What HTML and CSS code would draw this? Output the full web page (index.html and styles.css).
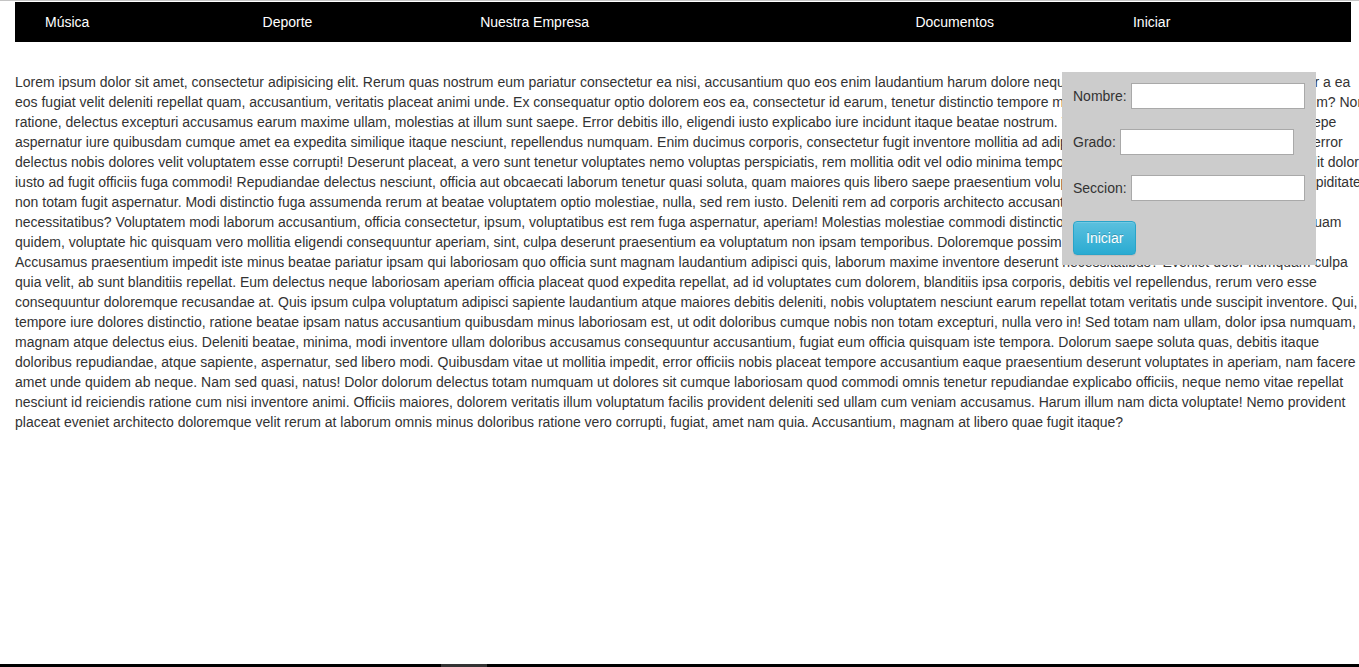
FILE: index.html
```html
<!DOCTYPE html>
<html lang="es">
<head>
<meta charset="utf-8">
<title>Inicio</title>
<link rel="stylesheet" href="styles.css">
</head>
<body>
<div class="topline"></div>
<nav class="menu">
  <a href="#" class="menu-item">Música</a>
  <a href="#" class="menu-item">Deporte</a>
  <a href="#" class="menu-item">Nuestra Empresa</a>
  <a href="#" class="menu-item menu-item--docs">Documentos</a>
  <a href="#" class="menu-item">Iniciar</a>
</nav>
<main class="content">
  <p class="lorem">Lorem ipsum dolor sit amet, consectetur adipisicing elit. Rerum quas nostrum eum pariatur consectetur ea nisi, accusantium quo eos enim laudantium harum dolore neque quisquam ullam, voluptas nobis tempor a ea<br>
eos fugiat velit deleniti repellat quam, accusantium, veritatis placeat animi unde. Ex consequatur optio dolorem eos ea, consectetur id earum, tenetur distinctio tempore molestiae ipsum ea reiciendis quasi dolorem? Non<br>
ratione, delectus excepturi accusamus earum maxime ullam, molestias at illum sunt saepe. Error debitis illo, eligendi iusto explicabo iure incidunt itaque beatae nostrum. Voluptatum aperiam, ipsum tenetur et saepe<br>
aspernatur iure quibusdam cumque amet ea expedita similique itaque nesciunt, repellendus numquam. Enim ducimus corporis, consectetur fugit inventore mollitia ad adipisci, natus quis sunt dolorum ipsa quod error<br>
delectus nobis dolores velit voluptatem esse corrupti! Deserunt placeat, a vero sunt tenetur voluptates nemo voluptas perspiciatis, rem mollitia odit vel odio minima tempora quam, sunt nesciunt debitis, quasi, velit dolores<br>
iusto ad fugit officiis fuga commodi! Repudiandae delectus nesciunt, officia aut obcaecati laborum tenetur quasi soluta, quam maiores quis libero saepe praesentium voluptatem aliquid, nulla, nemo sed facere cupiditate<br>
non totam fugit aspernatur. Modi distinctio fuga assumenda rerum at beatae voluptatem optio molestiae, nulla, sed rem iusto. Deleniti rem ad corporis architecto accusantium odio quis vel, quidem<br>
necessitatibus? Voluptatem modi laborum accusantium, officia consectetur, ipsum, voluptatibus est rem fuga aspernatur, aperiam! Molestias molestiae commodi distinctio odit, recusandae explicabo totam ipsa quam<br>
quidem, voluptate hic quisquam vero mollitia eligendi consequuntur aperiam, sint, culpa deserunt praesentium ea voluptatum non ipsam temporibus. Doloremque possimus nobis nulla.<br>
Accusamus praesentium impedit iste minus beatae pariatur ipsam qui laboriosam quo officia sunt magnam laudantium adipisci quis, laborum maxime inventore deserunt necessitatibus? Eveniet dolor numquam culpa<br>
quia velit, ab sunt blanditiis repellat. Eum delectus neque laboriosam aperiam officia placeat quod expedita repellat, ad id voluptates cum dolorem, blanditiis ipsa corporis, debitis vel repellendus, rerum vero esse<br>
consequuntur doloremque recusandae at. Quis ipsum culpa voluptatum adipisci sapiente laudantium atque maiores debitis deleniti, nobis voluptatem nesciunt earum repellat totam veritatis unde suscipit inventore. Qui,<br>
tempore iure dolores distinctio, ratione beatae ipsam natus accusantium quibusdam minus laboriosam est, ut odit doloribus cumque nobis non totam excepturi, nulla vero in! Sed totam nam ullam, dolor ipsa numquam,<br>
magnam atque delectus eius. Deleniti beatae, minima, modi inventore ullam doloribus accusamus consequuntur accusantium, fugiat eum officia quisquam iste tempora. Dolorum saepe soluta quas, debitis itaque<br>
doloribus repudiandae, atque sapiente, aspernatur, sed libero modi. Quibusdam vitae ut mollitia impedit, error officiis nobis placeat tempore accusantium eaque praesentium deserunt voluptates in aperiam, nam facere<br>
amet unde quidem ab neque. Nam sed quasi, natus! Dolor dolorum delectus totam numquam ut dolores sit cumque laboriosam quod commodi omnis tenetur repudiandae explicabo officiis, neque nemo vitae repellat<br>
nesciunt id reiciendis ratione cum nisi inventore animi. Officiis maiores, dolorem veritatis illum voluptatum facilis provident deleniti sed ullam cum veniam accusamus. Harum illum nam dicta voluptate! Nemo provident<br>
placeat eveniet architecto doloremque velit rerum at laborum omnis minus doloribus ratione vero corrupti, fugiat, amet nam quia. Accusantium, magnam at libero quae fugit itaque?</p>

  <form class="login">
    <div class="login-row">
      <label class="login-label" for="nombre">Nombre:</label>
      <input class="login-input" id="nombre" type="text">
    </div>
    <div class="login-row">
      <label class="login-label" for="grado">Grado:</label>
      <input class="login-input" id="grado" type="text">
    </div>
    <div class="login-row">
      <label class="login-label" for="seccion">Seccion:</label>
      <input class="login-input" id="seccion" type="text">
    </div>
    <button type="button" class="btn-info">Iniciar</button>
  </form>
</main>
<div class="scrollbar"><div class="scrollbar-thumb"></div></div>
</body>
</html>
```

FILE: styles.css
```css
html, body {
  overflow: hidden;
}
body {
  margin: 0;
  font-family: "Liberation Sans", Arial, Helvetica, sans-serif;
  font-size: 14px;
  line-height: 20px;
  color: #333;
  background: #fff;
}
.topline {
  height: 1px;
  background: #c4c4c4;
  margin-bottom: 1px;
}
.menu {
  display: grid;
  grid-template-columns: repeat(6, 217.6px);
  width: 1336px;
  box-sizing: border-box;
  margin-left: 15px;
  padding-left: 30px;
  height: 40px;
  background: #000;
}
.menu-item {
  color: #fff;
  text-decoration: none;
  line-height: 40px;
  white-space: nowrap;
}
.menu-item--docs {
  grid-column: 5;
}
.content {
  position: relative;
  padding: 30px 0 0 15px;
}
.lorem {
  margin: 0;
  white-space: nowrap;
}
.login {
  position: absolute;
  top: 30px;
  left: 1062px;
  width: 254px;
  box-sizing: border-box;
  padding: 11px 11px 10px;
  background: #cccccc;
  margin: 0;
}
.login-row {
  display: flex;
  align-items: center;
  gap: 4px;
  height: 26px;
  margin-bottom: 20px;
}
.login-label {
  color: #333;
  white-space: nowrap;
}
.login-input {
  width: 174px;
  height: 26px;
  box-sizing: border-box;
  border: 1px solid #a9a9a9;
  background: #fff;
  padding: 1px 2px;
  margin: 0;
  font: inherit;
}
.btn-info {
  display: block;
  margin: 0;
  padding: 6px 12px;
  font: inherit;
  font-size: 14px;
  line-height: 20px;
  color: #fff;
  text-shadow: 0 -1px 0 rgba(0, 0, 0, 0.2);
  background-image: linear-gradient(to bottom, #5bc0de 0, #2aabd2 100%);
  border: 1px solid #28a4c9;
  border-radius: 4px;
  box-shadow: inset 0 1px 0 rgba(255, 255, 255, 0.15), 0 1px 1px rgba(0, 0, 0, 0.075);
}
.scrollbar {
  position: fixed;
  left: 0;
  right: 0;
  bottom: 0;
  height: 3px;
  background: #000;
}
.scrollbar-thumb {
  position: absolute;
  left: 441px;
  width: 46px;
  top: 0;
  bottom: 0;
  background: #333;
}
```
